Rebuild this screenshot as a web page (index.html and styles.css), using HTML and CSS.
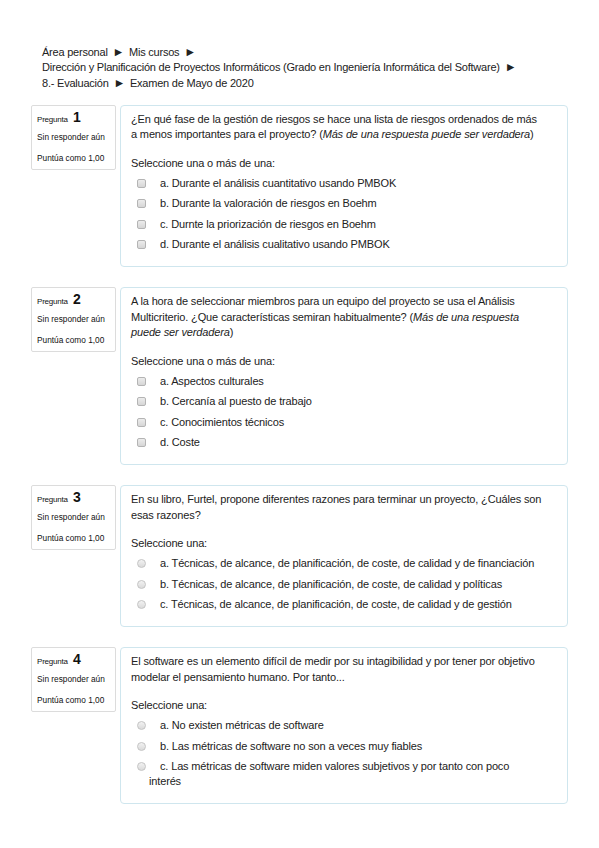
FILE: index.html
```html
<!DOCTYPE html>
<html lang="es">
<head>
<meta charset="utf-8">
<title>Examen de Mayo de 2020</title>
<link rel="stylesheet" href="styles.css">
</head>
<body>
<div class="page">
  <nav class="crumbs">
    <div>Área personal <span class="sep">►</span> Mis cursos <span class="sep">►</span></div>
    <div>Dirección y Planificación de Proyectos Informáticos (Grado en Ingeniería Informática del Software) <span class="sep">►</span></div>
    <div>8.- Evaluación <span class="sep">►</span> Examen de Mayo de 2020</div>
  </nav>

  <div class="que">
    <div class="info">
      <div class="qno">Pregunta <b>1</b></div>
      <div class="state">Sin responder aún</div>
      <div class="grade">Puntúa como 1,00</div>
    </div>
    <div class="content">
      <p class="qtext">¿En qué fase de la gestión de riesgos se hace una lista de riesgos ordenados de más a menos importantes para el proyecto? (<em>Más de una respuesta puede ser verdadera</em>)</p>
      <div class="prompt">Seleccione una o más de una:</div>
      <div class="opt"><span class="cb"></span>a. Durante el análisis cuantitativo usando PMBOK</div>
      <div class="opt"><span class="cb"></span>b. Durante la valoración de riesgos en Boehm</div>
      <div class="opt"><span class="cb"></span>c. Durnte la priorización de riesgos en Boehm</div>
      <div class="opt"><span class="cb"></span>d. Durante el análisis cualitativo usando PMBOK</div>
    </div>
  </div>

  <div class="que">
    <div class="info">
      <div class="qno">Pregunta <b>2</b></div>
      <div class="state">Sin responder aún</div>
      <div class="grade">Puntúa como 1,00</div>
    </div>
    <div class="content">
      <p class="qtext">A la hora de seleccionar miembros para un equipo del proyecto se usa el Análisis Multicriterio. ¿Que características semiran habitualmente? (<em>Más de una respuesta puede ser verdadera</em>)</p>
      <div class="prompt">Seleccione una o más de una:</div>
      <div class="opt"><span class="cb"></span>a. Aspectos culturales</div>
      <div class="opt"><span class="cb"></span>b. Cercanía al puesto de trabajo</div>
      <div class="opt"><span class="cb"></span>c. Conocimientos técnicos</div>
      <div class="opt"><span class="cb"></span>d. Coste</div>
    </div>
  </div>

  <div class="que">
    <div class="info">
      <div class="qno">Pregunta <b>3</b></div>
      <div class="state">Sin responder aún</div>
      <div class="grade">Puntúa como 1,00</div>
    </div>
    <div class="content">
      <p class="qtext">En su libro, Furtel, propone diferentes razones para terminar un proyecto, ¿Cuáles son esas razones?</p>
      <div class="prompt">Seleccione una:</div>
      <div class="opt"><span class="rb"></span>a. Técnicas, de alcance, de planificación, de coste, de calidad y de financiación</div>
      <div class="opt"><span class="rb"></span>b. Técnicas, de alcance, de planificación, de coste, de calidad y políticas</div>
      <div class="opt"><span class="rb"></span>c. Técnicas, de alcance, de planificación, de coste, de calidad y de gestión</div>
    </div>
  </div>

  <div class="que">
    <div class="info">
      <div class="qno">Pregunta <b>4</b></div>
      <div class="state">Sin responder aún</div>
      <div class="grade">Puntúa como 1,00</div>
    </div>
    <div class="content">
      <p class="qtext">El software es un elemento difícil de medir por su intagibilidad y por tener por objetivo modelar el pensamiento humano. Por tanto...</p>
      <div class="prompt">Seleccione una:</div>
      <div class="opt"><span class="rb"></span>a. No existen métricas de software</div>
      <div class="opt"><span class="rb"></span>b. Las métricas de software no son a veces muy fiables</div>
      <div class="opt"><span class="rb"></span>c. Las métricas de software miden valores subjetivos y por tanto con poco interés</div>
    </div>
  </div>
</div>
</body>
</html>
```

FILE: styles.css
```css
html, body {
  margin: 0;
  padding: 0;
  background: #ffffff;
}

body {
  font-family: "Liberation Sans", Arial, sans-serif;
  font-size: 11px;
  color: #222222;
}

.page {
  padding: 44.5px 31px 0 31px;
}

.crumbs {
  padding-left: 11px;
  line-height: 15.5px;
  margin-bottom: 13.5px;
  letter-spacing: -0.22px;
}

.crumbs .sep {
  font-size: 12px;
  margin: 0 2px;
}

.que {
  display: flex;
  align-items: flex-start;
  gap: 4px;
  margin-bottom: 20px;
}

.info {
  box-sizing: border-box;
  width: 85px;
  height: 65px;
  border: 1px solid #dcdcdc;
  border-radius: 2px;
  padding: 4px 5px;
  font-size: 8.3px;
  color: #111111;
}

.qno {
  line-height: 14px;
  font-size: 8px;
  letter-spacing: -0.2px;
}

.qno b {
  font-size: 14px;
  font-weight: bold;
  margin-left: 3px;
}

.state {
  margin-top: 5px;
  line-height: 10px;
}

.grade {
  margin-top: 11px;
  line-height: 10px;
}

.content {
  box-sizing: border-box;
  width: 448px;
  border: 1px solid #cfe6ee;
  border-radius: 4px;
  padding: 6px 24px 11px 10px;
  line-height: 15.5px;
  letter-spacing: -0.15px;
}

.qtext {
  margin: 0;
}

.qtext em {
  font-style: italic;
}

.prompt {
  margin-top: 13px;
  margin-bottom: 2px;
}

.opt {
  padding: 2.75px 0 2.75px 18px;
  text-indent: -12px;
  line-height: 15px;
}

.cb, .rb {
  display: inline-block;
  box-sizing: border-box;
  width: 9px;
  height: 9px;
  margin-right: 14px;
  vertical-align: -1px;
  text-indent: 0;
}

.cb {
  border: 1px solid #b4b4b4;
  border-radius: 2px;
  background: linear-gradient(#ececec, #d6d6d6);
}

.rb {
  border: 1px solid #c4c4c4;
  border-radius: 50%;
  background: linear-gradient(#f2f2f2, #dadada);
}
```
